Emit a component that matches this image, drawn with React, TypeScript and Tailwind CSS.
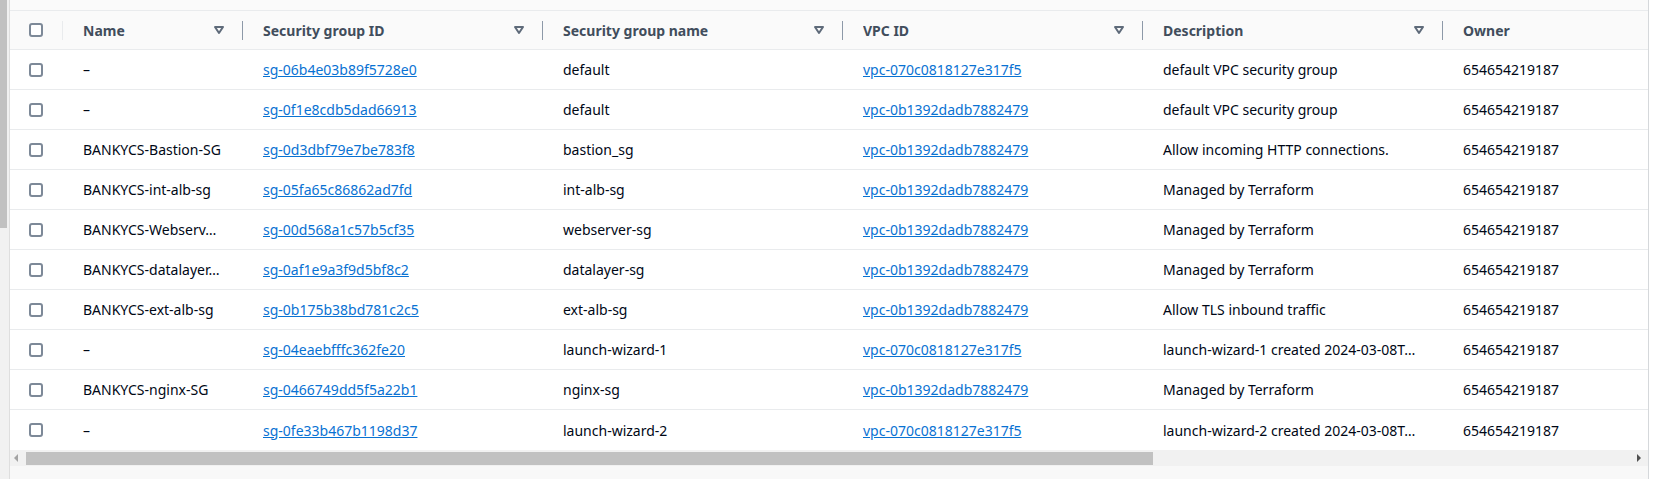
import React from "react";

type Row = {
  name: string;
  id: string;
  groupName: string;
  vpc: string;
  description: string;
  owner: string;
};

const rows: Row[] = [
  { name: "–", id: "sg-06b4e03b89f5728e0", groupName: "default", vpc: "vpc-070c0818127e317f5", description: "default VPC security group", owner: "654654219187" },
  { name: "–", id: "sg-0f1e8cdb5dad66913", groupName: "default", vpc: "vpc-0b1392dadb7882479", description: "default VPC security group", owner: "654654219187" },
  { name: "BANKYCS-Bastion-SG", id: "sg-0d3dbf79e7be783f8", groupName: "bastion_sg", vpc: "vpc-0b1392dadb7882479", description: "Allow incoming HTTP connections.", owner: "654654219187" },
  { name: "BANKYCS-int-alb-sg", id: "sg-05fa65c86862ad7fd", groupName: "int-alb-sg", vpc: "vpc-0b1392dadb7882479", description: "Managed by Terraform", owner: "654654219187" },
  { name: "BANKYCS-Webserv…", id: "sg-00d568a1c57b5cf35", groupName: "webserver-sg", vpc: "vpc-0b1392dadb7882479", description: "Managed by Terraform", owner: "654654219187" },
  { name: "BANKYCS-datalayer…", id: "sg-0af1e9a3f9d5bf8c2", groupName: "datalayer-sg", vpc: "vpc-0b1392dadb7882479", description: "Managed by Terraform", owner: "654654219187" },
  { name: "BANKYCS-ext-alb-sg", id: "sg-0b175b38bd781c2c5", groupName: "ext-alb-sg", vpc: "vpc-0b1392dadb7882479", description: "Allow TLS inbound traffic", owner: "654654219187" },
  { name: "–", id: "sg-04eaebfffc362fe20", groupName: "launch-wizard-1", vpc: "vpc-070c0818127e317f5", description: "launch-wizard-1 created 2024-03-08T…", owner: "654654219187" },
  { name: "BANKYCS-nginx-SG", id: "sg-0466749dd5f5a22b1", groupName: "nginx-sg", vpc: "vpc-0b1392dadb7882479", description: "Managed by Terraform", owner: "654654219187" },
  { name: "–", id: "sg-0fe33b467b1198d37", groupName: "launch-wizard-2", vpc: "vpc-070c0818127e317f5", description: "launch-wizard-2 created 2024-03-08T…", owner: "654654219187" },
];

const SortIcon = () => (
  <svg width="16" height="16" viewBox="0 0 16 16" className="shrink-0">
    <path d="M4 5h8l-4 6-4-6z" fill="none" stroke="#5f6b7a" strokeWidth="2" strokeLinejoin="round" />
  </svg>
);

const Checkbox = () => (
  <span className="block w-[14px] h-[14px] rounded-[3px] border-2 border-[#7d8998] bg-white" />
);

const HeaderCell = ({ label, width, sortable = true }: { label: string; width: string; sortable?: boolean }) => (
  <div className={`${width} shrink-0 h-full flex items-center pl-[20px]`}>
    <span className="flex-1 font-bold text-[#414d5c] truncate">{label}</span>
    {sortable && (
      <>
        <SortIcon />
        <span className="ml-[15px] w-px h-[19px] bg-[#8d99a8]" />
      </>
    )}
  </div>
);

const SecurityGroupsTable = () => {
  return (
    <div className="flex flex-col flex-1 min-w-0 overflow-hidden">
      <div className="h-[11px] shrink-0 bg-[#fafafa] border-b border-[#e9ebed]" />

      {/* header */}
      <div className="h-[39px] shrink-0 flex bg-[#fafafa] border-b border-[#e9ebed]">
        <div className="w-[53px] shrink-0 h-full flex items-center pl-[19px]">
          <Checkbox />
          <span className="ml-auto w-px h-[19px] bg-[#e9ebed]" />
        </div>
        <HeaderCell label="Name" width="w-[180px]" />
        <HeaderCell label="Security group ID" width="w-[300px]" />
        <HeaderCell label="Security group name" width="w-[300px]" />
        <HeaderCell label="VPC ID" width="w-[300px]" />
        <HeaderCell label="Description" width="w-[300px]" />
        <HeaderCell label="Owner" width="w-[300px]" sortable={false} />
      </div>

      {rows.map((r, i) => (
        <div
          key={r.id}
          className={`h-[40px] shrink-0 flex items-center bg-white ${i < rows.length - 1 ? "border-b border-[#e9ebed]" : ""}`}
        >
          <div className="w-[53px] shrink-0 pl-[19px]">
            <Checkbox />
          </div>
          <div className="w-[180px] shrink-0 pl-[20px] pr-[8px] whitespace-nowrap text-[#000716]">{r.name}</div>
          <div className="w-[300px] shrink-0 pl-[20px] pr-[20px] whitespace-nowrap">
            <a href="#" className="text-[#0972d3] underline">{r.id}</a>
          </div>
          <div className="w-[300px] shrink-0 pl-[20px] pr-[20px] whitespace-nowrap text-[#000716]">{r.groupName}</div>
          <div className="w-[300px] shrink-0 pl-[20px] pr-[20px] whitespace-nowrap">
            <a href="#" className="text-[#0972d3] underline">{r.vpc}</a>
          </div>
          <div className="w-[300px] shrink-0 pl-[20px] pr-[8px] whitespace-nowrap text-[#000716]">{r.description}</div>
          <div className="w-[300px] shrink-0 pl-[20px] pr-[20px] whitespace-nowrap text-[#000716]">{r.owner}</div>
        </div>
      ))}

      {/* horizontal scrollbar */}
      <div className="h-[16px] shrink-0 flex items-center bg-[#f1f1f1] pl-[4px] pr-[6px]">
        <svg width="6" height="8" viewBox="0 0 6 8" className="shrink-0">
          <path d="M4 0v8L0 4z" fill="#a3a3a3" />
        </svg>
        <div className="ml-[6px] w-[1127px] h-[13px] bg-[#c1c1c1]" />
        <svg width="6" height="8" viewBox="0 0 6 8" className="ml-auto shrink-0">
          <path d="M1 0v8l4-4z" fill="#505050" />
        </svg>
      </div>
      <div className="flex-1 bg-[#f8f8f8]" />
    </div>
  );
};

export default function App() {
  return (
    <div className="w-[1660px] h-[479px] flex bg-white text-[14px] font-['Noto_Sans',sans-serif] overflow-hidden">
      <div className="w-[10px] shrink-0 flex flex-col bg-[#f1f1f1] border-r border-[#dedede]">
        <div className="w-[7px] h-[228px] bg-[#c1c1c1]" />
      </div>
      <SecurityGroupsTable />
      <div className="w-[12px] shrink-0 bg-white border-l border-[#d5d8db]" />
    </div>
  );
}
